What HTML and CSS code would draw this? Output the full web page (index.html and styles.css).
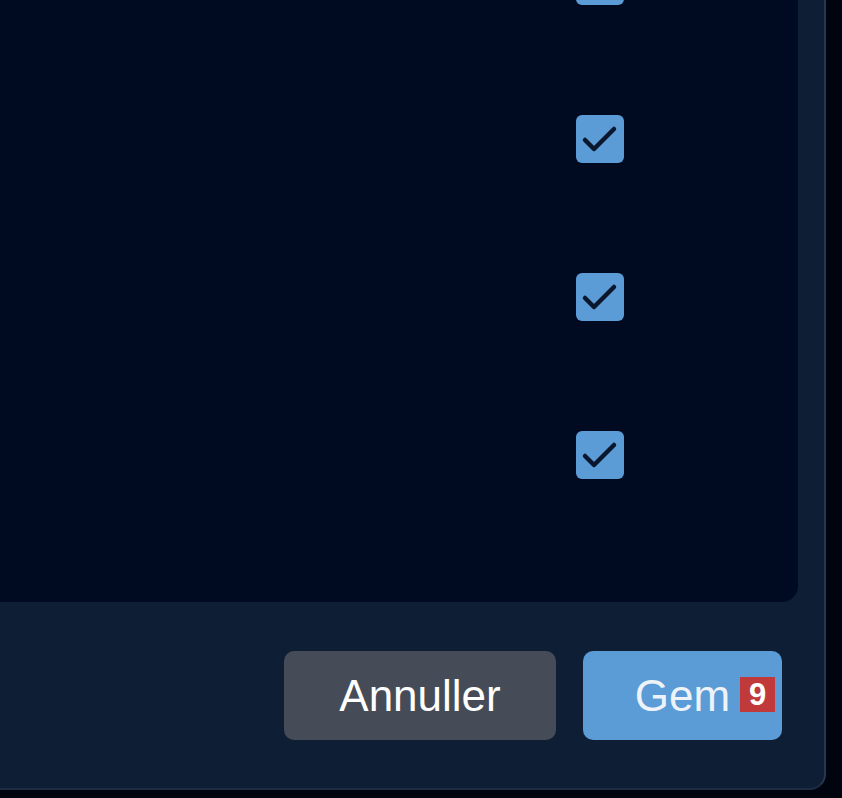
FILE: index.html
```html
<!DOCTYPE html>
<html lang="da">
<head>
<meta charset="utf-8">
<title>Indstillinger</title>
<link rel="stylesheet" href="styles.css">
</head>
<body>
<div class="dialog">
  <div class="content">
    <ul class="rows">
      <li class="row"><span class="checkbox"><svg viewBox="0 0 48 48"><path d="M9 25 L18 34 L38 14"/></svg></span></li>
      <li class="row"><span class="checkbox"><svg viewBox="0 0 48 48"><path d="M9 25 L18 34 L38 14"/></svg></span></li>
      <li class="row"><span class="checkbox"><svg viewBox="0 0 48 48"><path d="M9 25 L18 34 L38 14"/></svg></span></li>
      <li class="row"><span class="checkbox"><svg viewBox="0 0 48 48"><path d="M9 25 L18 34 L38 14"/></svg></span></li>
    </ul>
  </div>
  <div class="footer">
    <button class="btn btn-cancel">Annuller</button>
    <button class="btn btn-save">Gem<span class="badge">9</span></button>
  </div>
</div>
</body>
</html>
```
FILE: styles.css
```css
html, body {
  margin: 0;
  padding: 0;
  background: #00040e;
  height: 100%;
  overflow: hidden;
}
body {
  font-family: "Liberation Sans", Arial, sans-serif;
}
.dialog {
  width: 824px;
  height: 788px;
  background: #0e1f35;
  border-right: 2px solid #26374e;
  border-bottom: 2px solid #1b2c43;
  border-bottom-right-radius: 16px;
  display: flex;
  flex-direction: column;
}
.content {
  width: 798px;
  height: 602px;
  background: #000a20;
  border-bottom-right-radius: 16px;
  overflow: hidden;
}
.rows {
  list-style: none;
  margin: -98px 0 0 0;
  padding: 0;
}
.row {
  height: 158px;
  display: flex;
  align-items: center;
  justify-content: flex-end;
  padding-right: 174px;
}
.checkbox {
  width: 48px;
  height: 48px;
  border-radius: 6px;
  background: #5b9bd6;
  display: block;
}
.checkbox svg {
  width: 48px;
  height: 48px;
  display: block;
}
.checkbox path {
  fill: none;
  stroke: #0a172c;
  stroke-width: 4.5;
  stroke-linecap: round;
  stroke-linejoin: round;
}
.footer {
  display: flex;
  justify-content: flex-end;
  gap: 27px;
  padding: 49px 42px 0 0;
}
.btn {
  height: 89px;
  border: none;
  border-radius: 10px;
  font-family: "Liberation Sans", Arial, sans-serif;
  font-size: 44px;
  padding: 0;
  display: flex;
  align-items: center;
  justify-content: center;
}
.btn-cancel {
  width: 272px;
  background: #454c57;
  color: #ffffff;
}
.btn-save {
  width: 199px;
  background: #5b9bd6;
  color: #eef3f9;
  position: relative;
}
.badge {
  position: absolute;
  right: 7px;
  top: 26px;
  width: 35px;
  height: 35px;
  background: #c0393b;
  color: #ffffff;
  font-weight: bold;
  font-size: 31px;
  line-height: 35px;
  text-align: center;
}
```
